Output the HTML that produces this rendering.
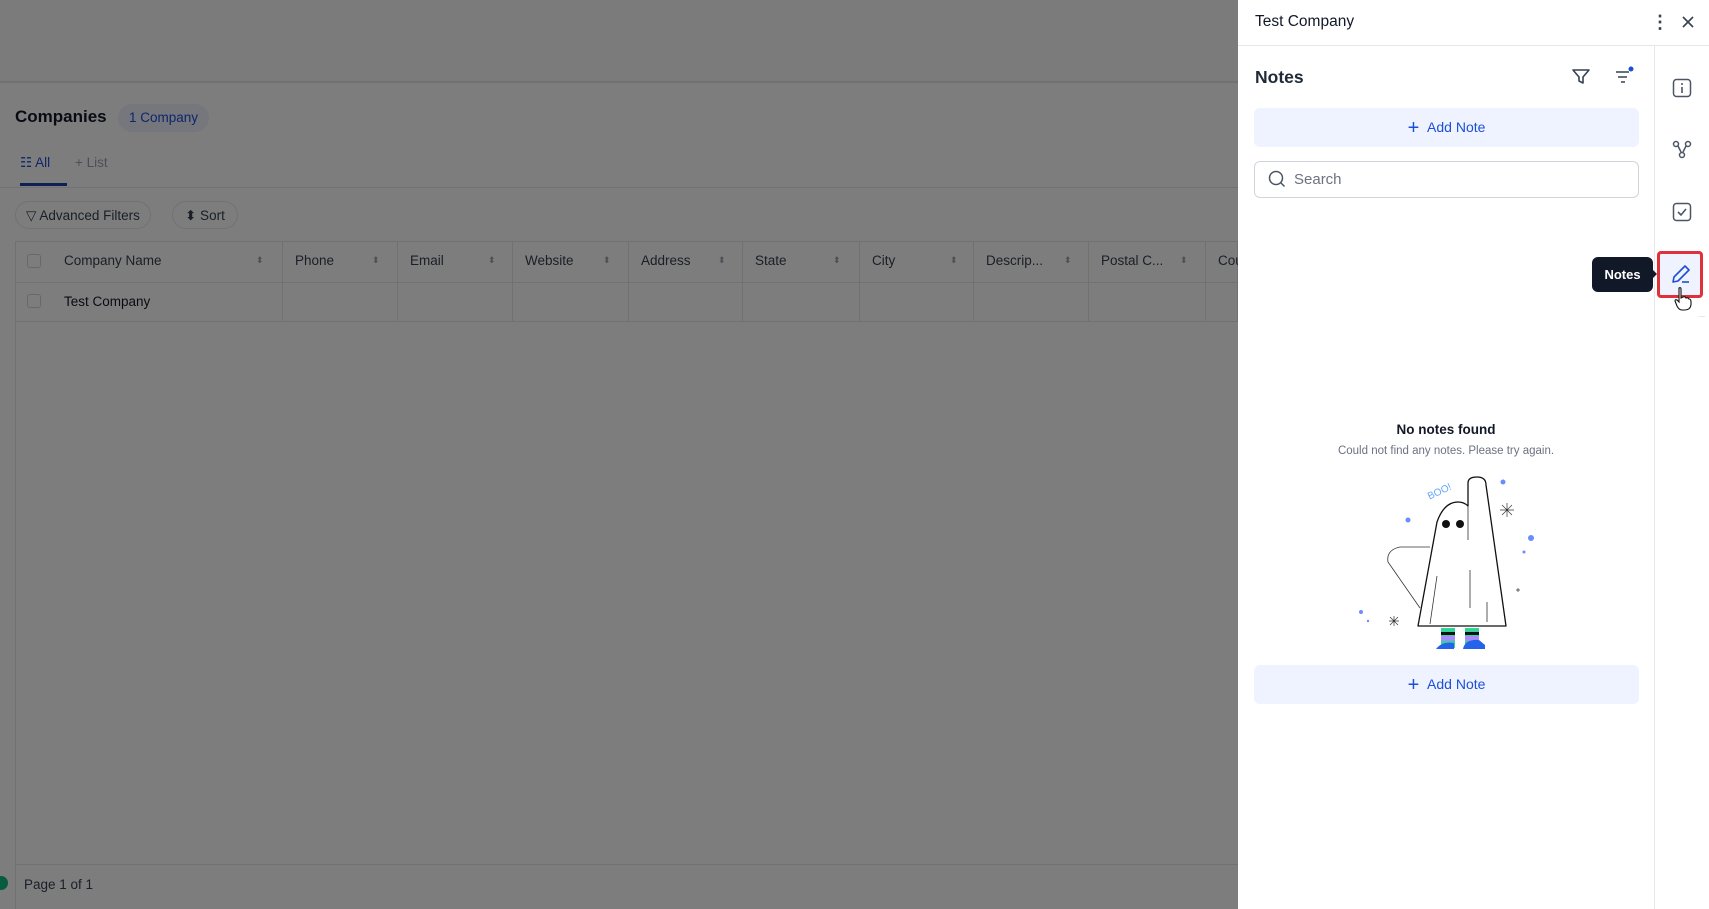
<!DOCTYPE html>
<html><head><meta charset="utf-8"><style>
*{box-sizing:border-box;margin:0;padding:0}
body{width:1709px;height:909px;overflow:hidden;font-family:"Liberation Sans",sans-serif;background:#fff;position:relative;color:#111827}
.abs{position:absolute}
.ov{position:absolute;left:0;top:0;width:1238px;height:909px;background:rgba(0,0,0,0.51)}
.th{position:absolute;top:241px;height:81px;border-right:1px solid #e5e7eb;font-size:13.5px;color:#374151;padding:12px 12px}
.sp{position:absolute;font-size:9px;color:#9ca3af}
</style></head><body>
<div class="abs" style="left:0;top:0;width:1238px;height:83px;background:#fafafa;border-bottom:2px solid #e5e7eb"></div>
<div class="abs" style="left:15px;top:107px;font-size:17px;font-weight:bold">Companies</div>
<div class="abs" style="left:118px;top:104px;height:28px;padding:6px 11px;border-radius:14px;background:#eef2ff;color:#1d4ed8;font-size:13.5px">1 Company</div>
<div class="abs" style="left:20px;top:155px;font-size:13.5px;color:#1d4ed8">☷ All</div>
<div class="abs" style="left:75px;top:155px;font-size:13.5px;color:#9ca3af">+ List</div>
<div class="abs" style="left:20px;top:183px;width:47px;height:3px;background:#1e40af"></div>
<div class="abs" style="left:0;top:187px;width:1238px;height:1px;background:#e5e7eb"></div>
<div class="abs" style="left:15px;top:201px;height:28px;padding:6px 10px;border:1px solid #e5e7eb;border-radius:14px;font-size:13.5px;color:#374151">▽ Advanced Filters</div>
<div class="abs" style="left:172px;top:201px;height:28px;padding:6px 12px;border:1px solid #e5e7eb;border-radius:14px;font-size:13.5px;color:#374151">⬍ Sort</div>
<div class="abs" style="left:15px;top:241px;width:1223px;height:81px;border:1px solid #e5e7eb;background:#fff"></div>
<div class="th" style="left:52px;width:231px">Company Name</div>
<div class="th" style="left:283px;width:115px">Phone</div>
<div class="th" style="left:398px;width:115px">Email</div>
<div class="th" style="left:513px;width:116px">Website</div>
<div class="th" style="left:629px;width:114px">Address</div>
<div class="th" style="left:743px;width:117px">State</div>
<div class="th" style="left:860px;width:114px">City</div>
<div class="th" style="left:974px;width:115px">Descrip...</div>
<div class="th" style="left:1089px;width:117px">Postal C...</div>
<div class="th" style="left:1206px;width:60px;border:none">Cou</div>
<div class="abs" style="left:15px;top:282px;width:1223px;height:1px;background:#e5e7eb"></div>
<div class="sp" style="left:256px;top:255px">⬍</div><div class="sp" style="left:372px;top:255px">⬍</div><div class="sp" style="left:488px;top:255px">⬍</div><div class="sp" style="left:603px;top:255px">⬍</div><div class="sp" style="left:718px;top:255px">⬍</div><div class="sp" style="left:833px;top:255px">⬍</div><div class="sp" style="left:950px;top:255px">⬍</div><div class="sp" style="left:1064px;top:255px">⬍</div><div class="sp" style="left:1180px;top:255px">⬍</div>
<div class="abs" style="left:27px;top:254px;width:14px;height:14px;border:1px solid #d1d5db;border-radius:3px;background:#fff"></div>
<div class="abs" style="left:27px;top:294px;width:14px;height:14px;border:1px solid #d1d5db;border-radius:3px;background:#fff"></div>
<div class="abs" style="left:64px;top:294px;font-size:13.5px">Test Company</div>
<div class="abs" style="left:15px;top:322px;width:1px;height:587px;background:#e5e7eb"></div>
<div class="abs" style="left:15px;top:864px;width:1223px;height:1px;background:#e5e7eb"></div>
<div class="abs" style="left:-6px;top:876px;width:14px;height:14px;border-radius:7px;background:#10b981"></div>
<div class="abs" style="left:24px;top:877px;font-size:13.5px;color:#374151">Page 1 of 1</div>
<div class="ov"></div>
<div class="abs" style="left:1238px;top:0;width:471px;height:909px;background:#fff"></div>
<div class="abs" style="left:1255px;top:13px;font-size:15.5px;color:#111827">Test Company</div>
<div class="abs" style="left:1651px;top:12px;font-size:18px;color:#374151;font-weight:bold;line-height:20px">⋮</div>
<svg class="abs" style="left:1681px;top:15px" width="14" height="14" viewBox="0 0 14 14"><path d="M2 2L12 12M12 2L2 12" stroke="#374151" stroke-width="1.6"/></svg>
<div class="abs" style="left:1238px;top:45px;width:471px;height:1px;background:#e5e7eb"></div>
<div class="abs" style="left:1654px;top:46px;width:1px;height:863px;background:#e5e7eb"></div>
<div class="abs" style="left:1255px;top:67px;font-size:17.5px;font-weight:bold;color:#1f2937">Notes</div>
<svg class="abs" style="left:1571px;top:67px" width="20" height="20" viewBox="0 0 20 20"><path d="M2 3h16l-6 7v6l-4-2v-4z" fill="none" stroke="#374151" stroke-width="1.6" stroke-linejoin="round"/></svg>
<svg class="abs" style="left:1613px;top:65px" width="22" height="20" viewBox="0 0 22 20"><path d="M3 7h13M5 12h9M8 17h4" stroke="#374151" stroke-width="1.6"/><circle cx="18" cy="4" r="2.5" fill="#1d4ed8"/></svg>
<div class="abs" style="left:1254px;top:108px;width:385px;height:39px;border-radius:6px;background:#eef3ff;color:#1d4ed8;font-size:14px;text-align:center;line-height:39px"><span style="font-size:20px;vertical-align:-2px">+</span>&nbsp;&nbsp;Add Note</div>
<div class="abs" style="left:1254px;top:161px;width:385px;height:37px;border-radius:6px;border:1px solid #d1d5db"></div>
<svg class="abs" style="left:1268px;top:170px" width="18" height="18" viewBox="0 0 18 18"><circle cx="8" cy="8" r="6.5" fill="none" stroke="#4b5563" stroke-width="1.5"/><path d="M13 13l3.5 3.5" stroke="#4b5563" stroke-width="1.5"/></svg>
<div class="abs" style="left:1294px;top:171px;font-size:15px;color:#6b7280">Search</div>
<svg class="abs" style="left:1672px;top:78px" width="20" height="20" viewBox="0 0 20 20"><rect x="1.5" y="1.5" width="17" height="17" rx="3" fill="none" stroke="#4b5563" stroke-width="1.5"/><path d="M10 9v6" stroke="#4b5563" stroke-width="1.6"/><circle cx="10" cy="6" r="1" fill="#4b5563"/></svg>
<svg class="abs" style="left:1672px;top:140px" width="20" height="20" viewBox="0 0 20 20"><circle cx="4" cy="4" r="2.5" fill="none" stroke="#4b5563" stroke-width="1.5"/><circle cx="16" cy="4" r="2.5" fill="none" stroke="#4b5563" stroke-width="1.5"/><circle cx="10" cy="15" r="2.5" fill="none" stroke="#4b5563" stroke-width="1.5"/><path d="M6 6l3 6M14 6l-3 6" stroke="#4b5563" stroke-width="1.5"/></svg>
<svg class="abs" style="left:1672px;top:202px" width="20" height="20" viewBox="0 0 20 20"><rect x="1.5" y="1.5" width="17" height="17" rx="3" fill="none" stroke="#4b5563" stroke-width="1.5"/><path d="M6 10l3 3 5-6" fill="none" stroke="#4b5563" stroke-width="1.6"/></svg>
<div class="abs" style="left:1657px;top:251px;width:46px;height:47px;border:3px solid #e0313a;border-radius:4px;background:#eef3ff"></div>
<svg class="abs" style="left:1670px;top:263px" width="22" height="22" viewBox="0 0 22 22"><path d="M3 19l1-5L15 3l4 4L8 18z" fill="none" stroke="#1d4ed8" stroke-width="1.6" stroke-linejoin="round"/><path d="M12 19h7" stroke="#1d4ed8" stroke-width="1.6"/></svg>
<svg class="abs" style="left:1674px;top:286px" width="18" height="26" viewBox="0 0 18 26"><path d="M5 2Q7 1 7 3V12L9 11Q11 10 12 12Q14 11 15 13Q17 13 17 16V19Q16 24 11 24H8Q5 24 3 20L1 15Q1 13 3 14L5 16V3Z" fill="#fff" stroke="#111" stroke-width="1.1"/></svg>
<div class="abs" style="left:1699px;top:316px;width:6px;height:1px;background:#e5e7eb"></div>
<div class="abs" style="left:1592px;top:257px;width:61px;height:35px;border-radius:6px;background:#111827;color:#fff;font-size:13px;font-weight:bold;text-align:center;line-height:35px">Notes</div>
<div class="abs" style="left:1652px;top:269px;width:0;height:0;border-top:5px solid transparent;border-bottom:5px solid transparent;border-left:5px solid #111827"></div>
<div class="abs" style="left:1238px;top:422px;width:416px;text-align:center;font-size:13.5px;font-weight:bold;color:#111827">No notes found</div>
<div class="abs" style="left:1238px;top:445px;width:416px;text-align:center;font-size:11.5px;color:#6b7280">Could not find any notes. Please try again.</div>
<svg class="abs" style="left:1340px;top:410px" width="220" height="250" viewBox="0 0 220 250">
<path d="M90 137H60Q46 140 48 152L80 198" fill="none" stroke="#333" stroke-width="0.8"/>
<path d="M101 218h14v20h-14zM125 218h14v20h-14z" fill="#34d399"/>
<path d="M101 222h14v3h-14zM125 222h14v3h-14z" fill="#111"/>
<path d="M101 226h14v5h-14zM125 226h14v5h-14z" fill="#a78bfa"/>
<path d="M96 239q6-8 18-6v6h-18zM123 239q2-10 16-9l6 5v4z" fill="#2563eb"/>
<path d="M78 216L97 112Q104 92 118 92Q124 92 128 96V73Q128 67 137 67Q146 67 146 75L166 216Z" fill="#fff" stroke="#111" stroke-width="1.3" stroke-linejoin="round"/>
<path d="M128 96V130M97 166L90 214M130 160V198M147 192V212" stroke="#333" stroke-width="0.8"/>
<circle cx="106" cy="114" r="4" fill="#111"/><circle cx="120" cy="114" r="4" fill="#111"/>
<text x="86" y="86" font-size="10" fill="#60a5fa" transform="rotate(-25 96 80)" font-family="Liberation Sans">BOO!</text>
<circle cx="68" cy="110" r="2.5" fill="#6b8cff"/><circle cx="163" cy="72" r="2.5" fill="#6b8cff"/><circle cx="191" cy="128" r="3" fill="#6b8cff"/><circle cx="184" cy="142" r="1.5" fill="#6b8cff"/><circle cx="21" cy="202" r="2" fill="#6b8cff"/><circle cx="28" cy="211" r="1.2" fill="#6b8cff"/>
<path d="M160 100h14M167 93v14M162 95l10 10M172 95l-10 10" stroke="#333" stroke-width="0.7"/>
<path d="M49 211h10M54 206v10M50 207l8 8M58 207l-8 8" stroke="#333" stroke-width="0.7"/>
<path d="M178 178v4M176 180h4" stroke="#333" stroke-width="0.7"/>
</svg>
<div class="abs" style="left:1254px;top:665px;width:385px;height:39px;border-radius:6px;background:#eef3ff;color:#1d4ed8;font-size:14px;text-align:center;line-height:39px"><span style="font-size:20px;vertical-align:-2px">+</span>&nbsp;&nbsp;Add Note</div>
</body></html>
